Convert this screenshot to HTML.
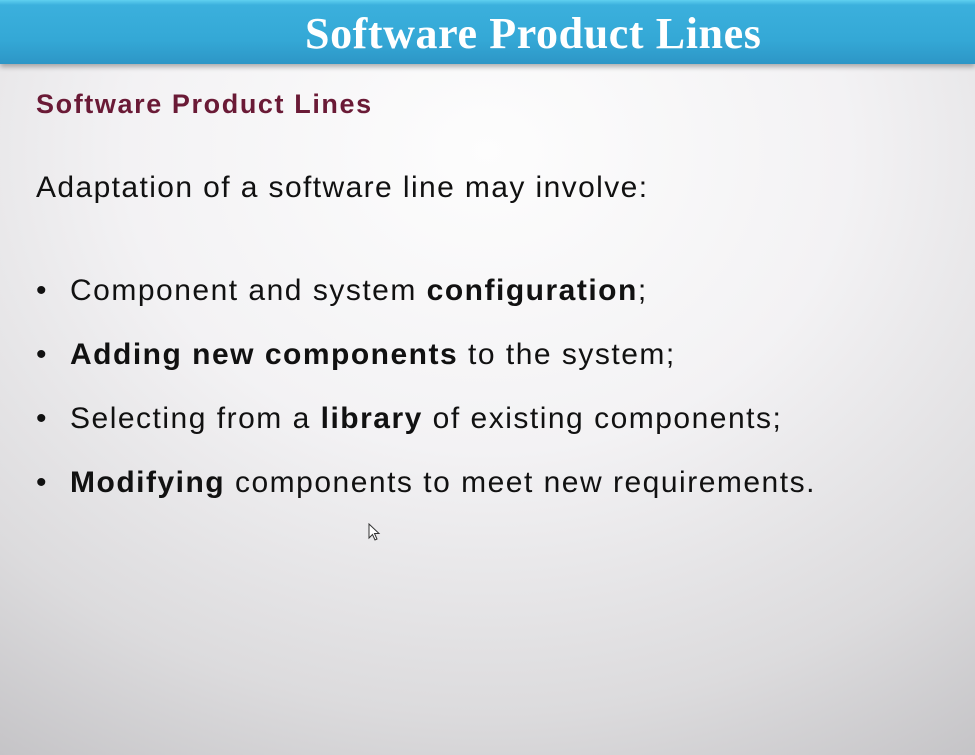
<!DOCTYPE html>
<html><head><style>
html,body{margin:0;padding:0}
body{width:975px;height:755px;overflow:hidden;position:relative;
background:radial-gradient(ellipse 900px 750px at 50% 20%,#fdfdfd 0%,#f3f2f4 40%,#dcdbdd 75%,#c2c1c4 100%);
font-family:"Liberation Sans",sans-serif;color:#111}
.bar{position:absolute;left:0;top:0;width:975px;height:64px;
background:linear-gradient(#5fd0f0 0px,#3bb0dd 5px,#34a8d6 40px,#2d96c6 64px);
box-shadow:0 3px 5px rgba(0,0,0,.3)}
.bar h1{margin:0;position:absolute;left:305px;top:8px;font-family:"Liberation Serif",serif;font-weight:bold;font-size:44px;color:#fff;letter-spacing:0.6px;white-space:nowrap}
.sub{position:absolute;left:36px;top:89px;font-size:27px;font-weight:bold;color:#6a1a36;letter-spacing:1.6px}
.p{position:absolute;left:36px;top:171px;font-size:30px;letter-spacing:1.4px;white-space:nowrap}
.b{position:absolute;left:70px;font-size:30px;letter-spacing:1.5px;white-space:nowrap}
.b:before{content:"•";position:absolute;left:-34px}
</style></head><body>
<div class="bar"><h1>Software Product Lines</h1></div>
<div class="sub">Software Product Lines</div>
<div class="p">Adaptation of a software line may involve:</div>
<div class="b" style="top:274px">Component and system <b>configuration</b>;</div>
<div class="b" style="top:338px"><b>Adding new components</b> to the system;</div>
<div class="b" style="top:402px">Selecting from a <b>library</b> of existing components;</div>
<div class="b" style="top:466px"><b>Modifying</b> components to meet new requirements.</div>
<svg style="position:absolute;left:368px;top:523px" width="14" height="20" viewBox="0 0 14 20"><path d="M1 1 L1 15 L4.5 11.5 L7 17 L9 16 L6.5 10.5 L11 10.5 Z" fill="#fff" stroke="#333" stroke-width="1"/></svg>
</body></html>
